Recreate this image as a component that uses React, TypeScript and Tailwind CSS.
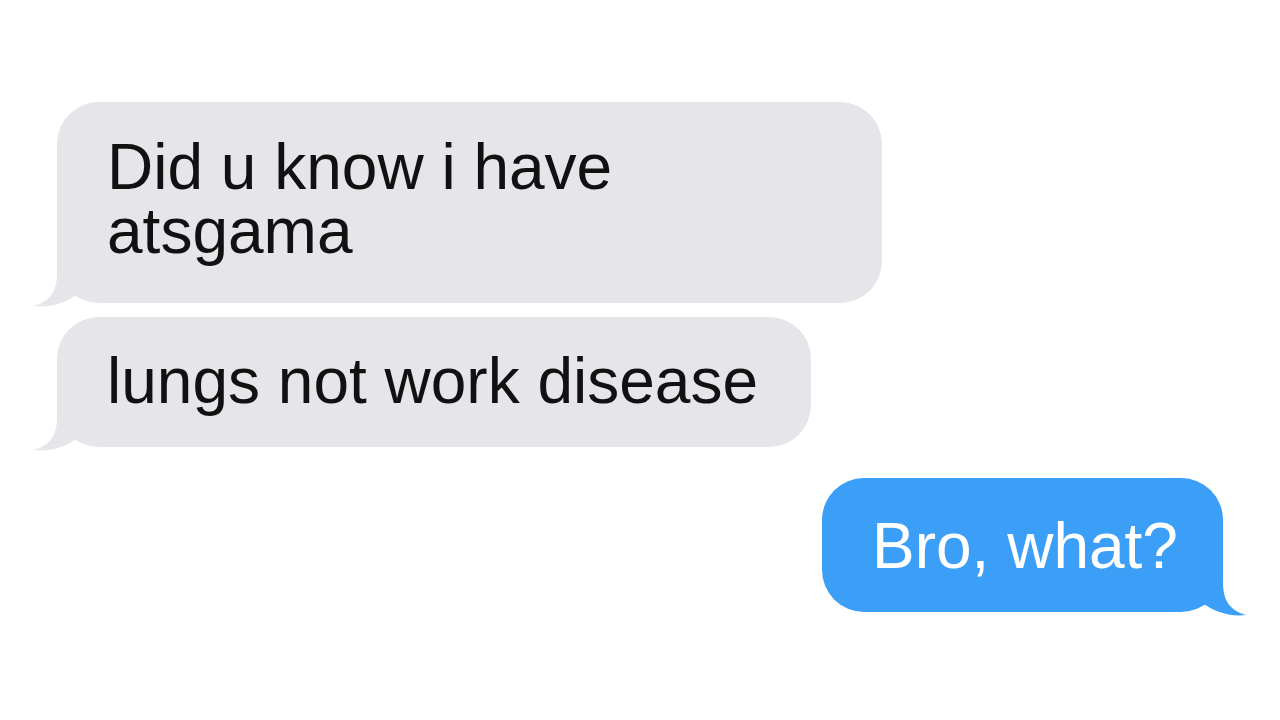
import React from 'react';

const GRAY = '#e5e5ea';
const BLUE = '#3c9ff7';

function Tail({ color, flip }: { color: string; flip?: boolean }) {
  return (
    <svg
      width={80}
      height={60}
      viewBox="0 0 80 60"
      className={flip ? 'absolute right-[-30px] bottom-[-10px] -scale-x-100' : 'absolute left-[-30px] bottom-[-10px]'}
    >
      <path
        d="M 30 0 L 30 20 C 30 38 24 48 7 53 C 24 55 40 49 52 40 C 58 46 66 49 78 50 L 78 0 Z"
        fill={color}
      />
    </svg>
  );
}

function Bubble({ text, w, h, pt, sent }: { text: string; w: string; h: string; pt: string; sent?: boolean }) {
  return (
    <div className={`relative ${w} ${h} ${pt} ${sent ? 'self-end bg-[#3c9ff7] text-white' : 'bg-[#e5e5ea] text-[#111111]'} rounded-[42px] pl-[50px] pr-[36px]`}>
      <Tail color={sent ? BLUE : GRAY} flip={sent} />
      <p className="relative text-[64px] leading-[64px]">{text}</p>
    </div>
  );
}

export default function App() {
  return (
    <div className="min-h-screen w-full bg-white font-['Liberation_Sans',Arial,sans-serif]">
      <div className="flex w-[1280px] flex-col px-[57px] pt-[102px]">
        <Bubble text="Did u know i have atsgama" w="w-[825px]" h="h-[201px]" pt="pt-[33px]" />
        <div className="mt-[14px]">
          <Bubble text="lungs not work disease" w="w-[754px]" h="h-[130px]" pt="pt-[32px]" />
        </div>
        <div className="mt-[31px] self-end">
          <Bubble text="Bro, what?" w="w-[401px]" h="h-[134px]" pt="pt-[36px]" sent />
        </div>
      </div>
    </div>
  );
}
